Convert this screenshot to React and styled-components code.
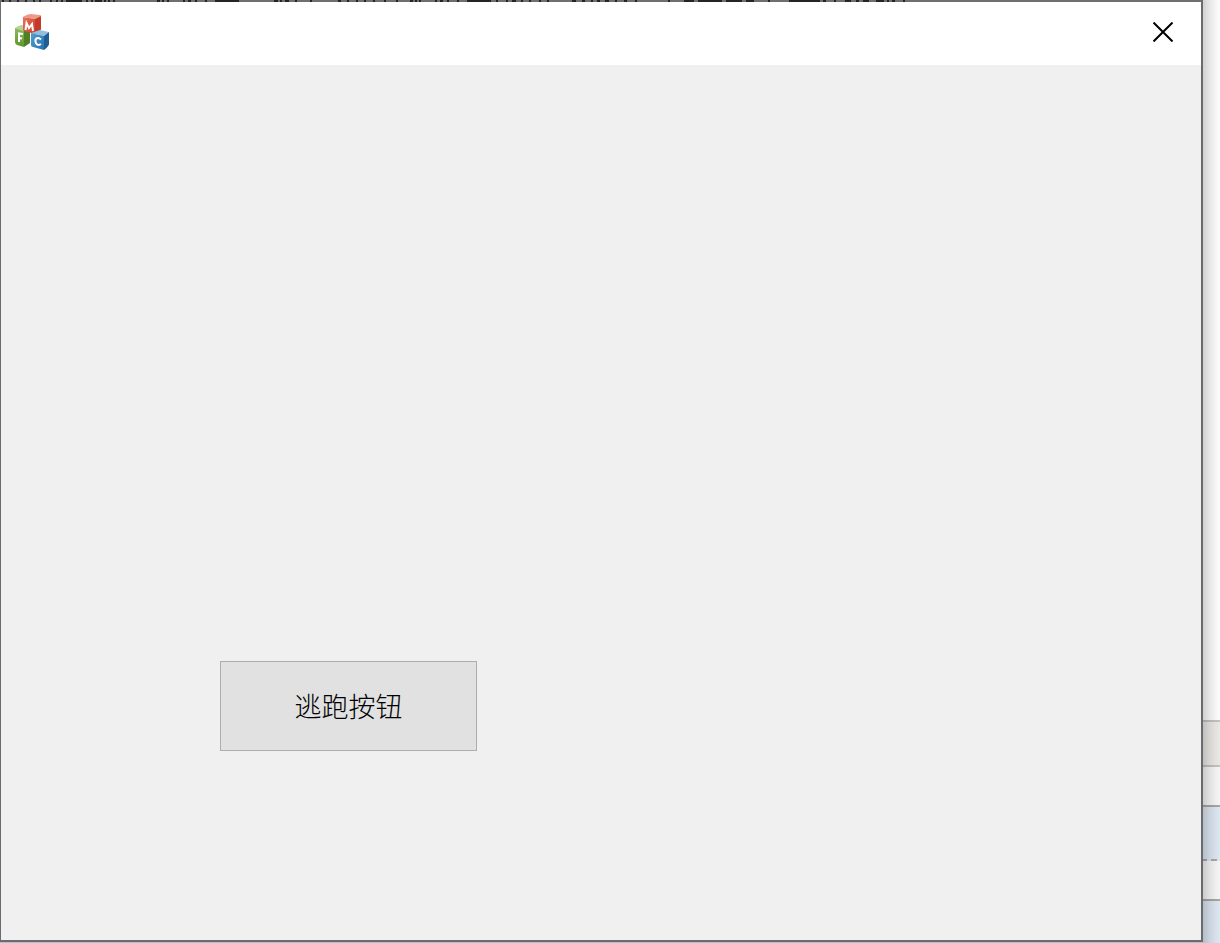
import React from 'react';
import styled, { createGlobalStyle, css } from 'styled-components';

const GlobalStyle = createGlobalStyle`
  *, *::before, *::after { box-sizing: border-box; }
  body {
    margin: 0;
    overflow: hidden;
    background: #fff;
    font-family: "Noto Sans CJK SC", "Noto Sans", sans-serif;
  }
`;

const Desktop = styled.div`
  display: grid;
  grid-template-columns: minmax(0, 1fr) 17px;
  min-height: 100vh;
`;

const DialogColumn = styled.div`
  display: flex;
  padding-bottom: 1px;
  background: #b7bec8;
`;

const Dialog = styled.main`
  position: relative;
  flex: 1;
  display: flex;
  flex-direction: column;
  border: solid #696b6e;
  border-width: 2px 2px 2px 1px;
  border-top-color: #706f6f;
  background: #f0f0f0;
`;

const BorderMarks = styled.svg`
  position: absolute;
  top: -2px;
  left: -1px;
`;

const TitleBar = styled.header`
  display: flex;
  align-items: center;
  justify-content: space-between;
  height: 63px;
  padding: 0 14px 2px 12px;
  background: #fff;
`;

const CloseButton = styled.button`
  display: grid;
  place-items: center;
  width: 48px;
  height: 50px;
  padding: 0 0 2px;
  border: 0;
  background: transparent;
`;

const Content = styled.section`
  flex: 1;
  display: flex;
  align-items: flex-end;
  padding: 0 219px 189px;
`;

const PushButton = styled.button`
  width: 257px;
  height: 90px;
  padding: 0;
  border: 1px solid #adadad;
  background: #e1e1e1;
  color: #000;
  font-family: "Noto Sans CJK SC", sans-serif;
  font-size: 27px;
  font-weight: 300;
  line-height: 40px;
`;

const Backdrop = styled.aside`
  position: relative;
  display: flex;
  flex-direction: column;
  &::after {
    content: "";
    position: absolute;
    inset: 0;
    background: linear-gradient(to right, rgba(0,0,0,.18), rgba(0,0,0,.1) 35%, rgba(0,0,0,.04) 75%, rgba(0,0,0,.01));
  }
`;

const fills = { page: '#fff', bar: '#ecebe8', row: '#f8f8f8', blue: '#dfe9f4' };

const Band = styled.div`
  flex: ${({ $size }) => ($size ? `0 0 ${$size}px` : '1')};
  background: ${({ $fill }) => fills[$fill]};
  ${({ $line }) => $line && css`border-bottom: 2px solid ${$line};`}
`;

const DashedLine = styled.div`
  height: 2px;
  background: repeating-linear-gradient(to right, #aaa 0 4px, #dfe9f4 4px 8px, #aaa 8px 14px, #dfe9f4 14px 18px);
`;

const MfcIcon = () => (
  <svg width="40" height="40" viewBox="0 0 40 40" role="img" aria-label="MFC">
    <defs>
      <linearGradient id="red" x2="1" y2="1"><stop stopColor="#e8755f" /><stop offset="1" stopColor="#cf3a26" /></linearGradient>
      <linearGradient id="green" x2="0" y2="1"><stop stopColor="#8cbc5c" /><stop offset="1" stopColor="#5c962c" /></linearGradient>
      <linearGradient id="blue" x2="1" y2="1"><stop stopColor="#549fd0" /><stop offset="1" stopColor="#2472ae" /></linearGradient>
    </defs>
    <path d="M2 15Q6 12 9 12L17 14 11 18Z" fill="#b5d392" />
    <path d="M2 15 11 18V34L4 32Q2 31 2 29Z" fill="url(#green)" />
    <path d="M11 18 17 15V30L11 34Z" fill="#517f28" />
    <path d="M10 4Q14 1 18 1L27 2Q28 2 28 3L22 6Z" fill="#ed9a86" />
    <path d="M10 4 22 6V21L11 18Q10 18 10 17Z" fill="url(#red)" />
    <path d="M22 6 28 3V16Q28 18 22 21Z" fill="#c33a29" />
    <path d="M18 20 27 17 36 19 31 23Z" fill="#91c0df" />
    <path d="M18 20 31 23V37L20 34Q18 34 18 32Z" fill="url(#blue)" />
    <path d="M31 23 36 19V31Q36 33 31 37Z" fill="#205d93" />
    <g fill="none" stroke="#fff" strokeWidth="2">
      <path d="M12.5 17 13.5 10 16 15 19 11 20 18" />
      <path d="M6 29V20.5L10 21M6 25L9 25.5" />
      <path d="M28 26.5C25 23.500 22 25.500 22.500 28.500S25 33 28 31" />
    </g>
  </svg>
);

const CloseIcon = () => (
  <svg width="20" height="20" viewBox="0 0 20 20" aria-hidden="true">
    <path d="M.5 .5 19.500 19.500M19.500 .5 .5 19.500" stroke="#000" strokeWidth="2" />
  </svg>
);

/* [start, width] of each dark mark along the dialog's top border */
const marks = [
  [2, 2], [9, 2], [17, 2], [25, 2], [33, 2], [39, 2], [50, 2], [56, 2], [61, 2], [66, 16],
  [86, 2], [91, 2], [95, 7], [104, 2], [108, 2], [113, 2],
  [157, 3], [162, 2], [167, 2], [183, 2], [188, 3], [195, 2], [205, 2], [215, 24],
  [274, 4], [280, 2], [285, 4], [295, 2], [310, 2],
  [338, 3], [347, 2], [356, 2], [364, 2], [373, 2], [384, 2], [396, 2],
  [410, 3], [415, 2], [419, 2], [435, 2], [440, 3], [447, 2], [457, 2], [467, 24],
  [496, 2], [506, 2], [512, 4], [521, 2], [529, 2], [539, 2], [547, 2],
  [572, 4], [582, 3], [591, 2], [597, 3], [605, 4], [615, 2], [624, 3], [635, 2],
  [668, 2], [684, 10], [698, 24], [726, 16], [746, 8], [768, 2],
  [789, 31], [823, 3], [834, 2], [845, 6], [856, 3], [863, 6], [876, 8], [887, 2], [892, 3], [903, 2],
];

export default function App() {
  return (
    <>
      <GlobalStyle />
      <Desktop>
        <DialogColumn>
          <Dialog>
            <BorderMarks width="910" height="2" aria-hidden="true">
              {marks.map(([x, width]) => (
                <rect key={x} x={x} width={width} height="2" fill="#242326" />
              ))}
            </BorderMarks>
            <TitleBar>
              <MfcIcon />
              <CloseButton type="button" aria-label="Close"><CloseIcon /></CloseButton>
            </TitleBar>
            <Content>
              <PushButton type="button">逃跑按钮</PushButton>
            </Content>
          </Dialog>
        </DialogColumn>
        <Backdrop aria-hidden="true">
          <Band $fill="page" $line="#c4c4c4" />
          <Band $fill="bar" $size={45} $line="#c4c4c4" />
          <Band $fill="row" $size={40} $line="#a8a8a8" />
          <Band $fill="blue" $size={52} />
          <DashedLine />
          <Band $fill="row" $size={40} $line="#a8a8a8" />
          <Band $fill="blue" $size={42} />
        </Backdrop>
      </Desktop>
    </>
  );
}
